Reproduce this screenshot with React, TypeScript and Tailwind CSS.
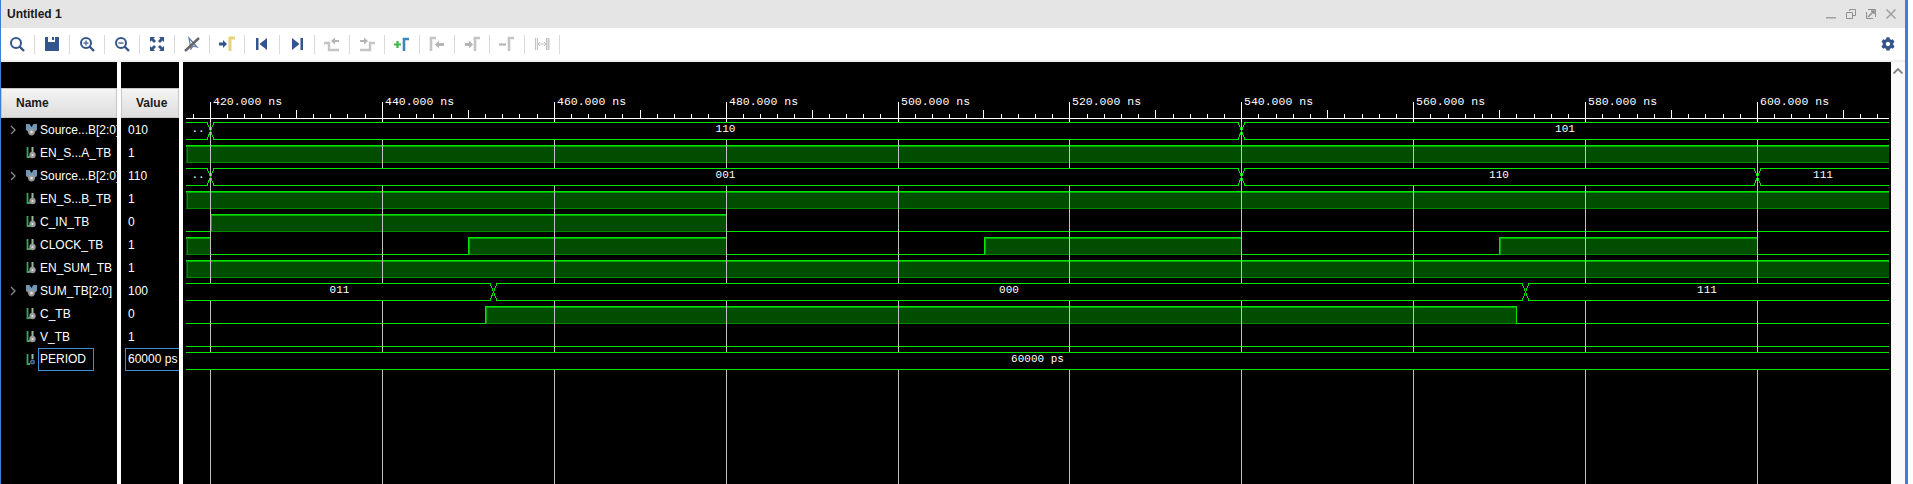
import type { ReactNode } from 'react'
import { FaCog } from 'react-icons/fa'

const BLUE = '#34558b'
const GRAY = '#c4c4c4'
const GREEN = '#00e600'
const MID = '#00a800'
const DIM = '#008800'
const FILL = '#004d00'

const LEFT = 186
const RIGHT = 1889

function Glass({ mark }: { mark?: 'plus' | 'minus' }) {
  return (
    <svg width="16" height="16" viewBox="0 0 16 16" fill="none" stroke={BLUE}>
      <circle cx="7" cy="7" r="5" strokeWidth="2" />
      <path d="M10.5 10.5L15 15" strokeWidth="2.4" />
      {mark && <path d="M4.5 7h5" strokeWidth="1.6" stroke="#5a78a8" />}
      {mark === 'plus' && <path d="M7 4.5v5" strokeWidth="1.6" stroke="#5a78a8" />}
    </svg>
  )
}

const tools: ReactNode[] = [
  <Glass key="search" />,
  <svg key="save" width="16" height="16" viewBox="0 0 16 16">
    <path d="M1 1h3v5h7V1h4v14H1z" fill={BLUE} />
    <path d="M8 1h2v3H8z" fill={BLUE} />
  </svg>,
  <Glass key="in" mark="plus" />,
  <Glass key="out" mark="minus" />,
  <svg key="fit" width="16" height="16" viewBox="0 0 16 16" fill={BLUE}>
    <path d="M1 1h5L4.6 2.6 7 5 5 7 2.6 4.6 1 6z" />
    <path d="M15 1v5l-1.6-1.6L11 7 9 5l2.4-2.4L10 1z" />
    <path d="M1 15v-5l1.6 1.6L5 9l2 2-2.4 2.4L6 15z" />
    <path d="M15 15h-5l1.6-1.6L9 11l2-2 2.4 2.4L15 10z" />
  </svg>,
  <svg key="cursor" width="16" height="16" viewBox="0 0 16 16" fill="none">
    <path d="M5 2l2 11 2-3 4 1z" stroke="#5a78a8" strokeWidth="1.2" />
    <path d="M1 15L15 2" stroke="#666" strokeWidth="2.4" />
  </svg>,
  <svg key="goto" width="18" height="16" viewBox="0 0 18 16" fill="none">
    <path d="M1 6.5h4V4l4 4-4 4V9.5H1z" fill={BLUE} />
    <path d="M12 15V2h5" stroke="#e8d27a" strokeWidth="3" />
  </svg>,
  <svg key="prev" width="16" height="16" viewBox="0 0 16 16" fill={BLUE}>
    <path d="M2 2h2.5v12H2z" />
    <path d="M13 2v12L5.5 8z" />
  </svg>,
  <svg key="next" width="16" height="16" viewBox="0 0 16 16" fill={BLUE}>
    <path d="M11.5 2H14v12h-2.5z" />
    <path d="M3 2v12l7.5-6z" />
  </svg>,
  <svg key="stepl" width="16" height="16" viewBox="0 0 16 16" fill="none">
    <path d="M0 7h5v7h10" stroke={GRAY} strokeWidth="2.4" />
    <path d="M15 4H11V1.5L7 5l4 3.5V6h4z" fill="#b5b5b5" />
  </svg>,
  <svg key="stepr" width="16" height="16" viewBox="0 0 16 16" fill="none">
    <path d="M1 14h10V7h5" stroke={GRAY} strokeWidth="2.4" />
    <path d="M1 4h4V1.5L9 5 5 8.5V6H1z" fill="#b5b5b5" />
  </svg>,
  <svg key="add" width="16" height="16" viewBox="0 0 16 16" fill="none">
    <path d="M0 8.5h7M3.5 5v7" stroke="#3fb54a" strokeWidth="2.2" />
    <path d="M10 15V3h5" stroke="#3a86b8" strokeWidth="2.6" />
  </svg>,
  <svg key="mprev" width="16" height="16" viewBox="0 0 16 16" fill="none">
    <path d="M2 15V2h5" stroke={GRAY} strokeWidth="2.6" />
    <path d="M15 7h-5V4.5L6 8.5l4 4V10h5z" fill="#b5b5b5" />
  </svg>,
  <svg key="mnext" width="16" height="16" viewBox="0 0 16 16" fill="none">
    <path d="M1 7h4V4.5l4 4-4 4V10H1z" fill="#b5b5b5" />
    <path d="M11 15V2h5" stroke={GRAY} strokeWidth="2.6" />
  </svg>,
  <svg key="mdel" width="16" height="16" viewBox="0 0 16 16" fill="none">
    <path d="M0 8.5h7" stroke="#b5b5b5" strokeWidth="2.2" />
    <path d="M10 15V2h5" stroke={GRAY} strokeWidth="2.6" />
  </svg>,
  <svg key="span" width="16" height="16" viewBox="0 0 16 16" fill="none" stroke={GRAY}>
    <path d="M1.5 2v12M3.5 2v12M12.5 2v12" strokeWidth="1.2" />
    <path d="M14.5 2v12" strokeWidth="2" />
    <path d="M4 8h8M6 6L4 8l2 2M10 6l2 2-2 2" strokeWidth="1" />
  </svg>,
]

type Row = { name: string; value: string; bus?: boolean; dot?: boolean; selected?: boolean }

const rows: Row[] = [
  { name: 'Source...B[2:0]', value: '010', bus: true },
  { name: 'EN_S...A_TB', value: '1' },
  { name: 'Source...B[2:0]', value: '110', bus: true },
  { name: 'EN_S...B_TB', value: '1' },
  { name: 'C_IN_TB', value: '0' },
  { name: 'CLOCK_TB', value: '1' },
  { name: 'EN_SUM_TB', value: '1' },
  { name: 'SUM_TB[2:0]', value: '100', bus: true },
  { name: 'C_TB', value: '0' },
  { name: 'V_TB', value: '1' },
  { name: 'PERIOD', value: '60000 ps', dot: true, selected: true },
]

function SignalIcon({ bus, dot }: { bus?: boolean; dot?: boolean }) {
  if (bus) {
    return (
      <svg width="13" height="14" viewBox="0 0 13 14">
        <path d="M1 1h3.5l2 3 2-3H12v6l-2.5 2h-6L1 7z" fill="#6f96b4" />
        <circle cx="6.5" cy="9" r="3.4" fill="#9a9a9a" />
        <circle cx="6.5" cy="9" r="1.3" fill="#e4e4e4" />
      </svg>
    )
  }
  return (
    <svg width="13" height="14" viewBox="0 0 13 14" fill="none">
      <path d="M2.5 1v10H5" stroke="#3fa05f" strokeWidth="1.8" />
      <path d="M7.5 1v5" stroke="#9ab8a0" strokeWidth="2" />
      <circle cx="7.5" cy="9" r={dot ? 2.5 : 3.2} fill={dot ? '#4a6a9c' : '#9a9a9a'} />
      <circle cx="7.5" cy="9" r="1.1" fill={dot ? '#20304c' : '#e4e4e4'} />
    </svg>
  )
}

const majorX = Array.from({ length: 10 }, (_, i) => Math.floor(210.4 + i * 171.9))

function ticks() {
  const out: { x: number; tall: boolean }[] = []
  for (let n = -1; n < 100; n++) {
    const x = Math.floor(210.4 + n * 17.19)
    if (n % 10 === 0 || x < LEFT || x > RIGHT - 1) continue
    out.push({ x, tall: n % 5 === 0 })
  }
  return out
}

function hline(x1: number, x2: number, y: number, color = GREEN) {
  return <rect x={x1} y={y} width={x2 - x1} height={1} fill={color} />
}

function vline(x: number, y1: number, y2: number, color = GREEN) {
  return <rect x={x} y={y1} width={1} height={y2 - y1} fill={color} />
}

// rising/falling edges of a one bit signal, levels alternate from `startHigh`
function Digital({ row, edges, startHigh }: { row: number; edges: number[]; startHigh: boolean }) {
  const top = 122 + row * 23
  const bottom = top + 17
  const points = [LEFT, ...edges, RIGHT]
  return (
    <g>
      {points.slice(0, -1).map((x1, i) => {
        const x2 = points[i + 1]
        const high = startHigh ? i % 2 === 0 : i % 2 === 1
        if (!high) return <g key={x1}>{hline(x1, x2, bottom)}</g>
        const edgeLeft = x1 !== LEFT
        return (
          <g key={x1}>
            <rect x={x1} y={top + 1} width={x2 - x1} height={16} fill={FILL} />
            {hline(x1, x2, top)}
            {hline(x1, x2, top + 1, MID)}
            {hline(x1, x2, bottom, DIM)}
            {edgeLeft ? vline(x1, top, bottom + 1) : vline(x1 + 1, top + 1, bottom, DIM)}
            {edgeLeft && vline(x1 + 1, top + 1, bottom, MID)}
            {x2 !== RIGHT && vline(x2, top, bottom + 1)}
          </g>
        )
      })}
    </g>
  )
}

function Bus({ row, edges, labels }: { row: number; edges: number[]; labels: string[] }) {
  const top = 122 + row * 23
  const bottom = top + 17
  const points = [LEFT, ...edges, RIGHT]
  return (
    <g>
      <rect x={LEFT} y={top + 1} width={RIGHT - LEFT} height={16} fill="#000" />
      {edges.filter((x) => majorX.includes(x)).map((x) => (
        <g key={x}>{vline(x, top, bottom, '#c0c0c0')}</g>
      ))}
      {points.slice(0, -1).map((a, i) => {
        const b = points[i + 1]
        const x1 = a === LEFT ? LEFT : a + 4
        const x2 = b === RIGHT ? RIGHT : b - 3
        return (
          <g key={a}>
            {hline(x1, x2, top)}
            {hline(x1, x2, bottom)}
            <text
              x={(a + b) / 2}
              y={top + 10}
              textAnchor="middle"
              fill="#fff"
              className="font-['Liberation_Mono',monospace] text-[11px]"
            >
              {labels[i]}
            </text>
          </g>
        )
      })}
      {edges.map((x) => (
        <path
          key={x}
          d={`M${x - 3} ${top + 0.5}L${x + 4} ${bottom + 0.5}M${x - 3} ${bottom + 0.5}L${x + 4} ${top + 0.5}`}
          stroke={GREEN}
          strokeWidth="1"
        />
      ))}
    </g>
  )
}

function Waves() {
  return (
    <svg width="1708" height="422" viewBox="183 62 1708 422" shapeRendering="crispEdges" className="block">
      <Digital row={1} edges={[]} startHigh />
      <Digital row={3} edges={[]} startHigh />
      <Digital row={4} edges={[210, 726]} startHigh={false} />
      <Digital row={5} edges={[210, 468, 726, 984, 1241, 1499, 1757]} startHigh />
      <Digital row={6} edges={[]} startHigh />
      <Digital row={8} edges={[485, 1516]} startHigh={false} />
      {hline(LEFT, RIGHT, 346)}

      {majorX.map((x) => (
        <g key={x}>{vline(x, 122, 484, '#c0c0c0')}</g>
      ))}

      <Bus row={0} edges={[210, 1241]} labels={['..', '110', '101']} />
      <Bus row={2} edges={[210, 1241, 1757]} labels={['..', '001', '110', '111']} />
      <Bus row={7} edges={[493, 1525]} labels={['011', '000', '111']} />
      <Bus row={10} edges={[]} labels={['60000 ps']} />

      {hline(LEFT, RIGHT, 118, '#fff')}
      {ticks().map(({ x, tall }) => (
        <g key={x}>{vline(x, tall ? 110 : 114, 118, '#fff')}</g>
      ))}
      {majorX.map((x, i) => (
        <g key={x}>
          {vline(x, 102, 122, '#fff')}
          <text x={x + 3} y={105} fill="#fff" className="font-['Liberation_Mono',monospace] text-[11.5px]">
            {420 + i * 20}.000 ns
          </text>
        </g>
      ))}
    </svg>
  )
}

export default function App() {
  return (
    <div className="w-[1913px] h-[484px] bg-white overflow-hidden flex font-['Liberation_Sans',sans-serif]">
      <div className="w-[1905px] h-full flex flex-col border-l border-[#3d7fd6]">

        {/* Title bar */}
        <div className="h-[28px] shrink-0 bg-[#e5e5e5] flex items-center justify-between pl-[6px] pr-[4px]">
          <span className="text-[12px] font-bold text-[#1a1a1a]">Untitled 1</span>
          <div className="flex items-center">
            <div className="w-5 h-5 flex items-center justify-center">
              <svg width="12" height="12" viewBox="0 0 12 12"><path d="M1 9h10v1.5H1z" fill="#a0a0a0" /></svg>
            </div>
            <div className="w-5 h-5 flex items-center justify-center">
              <svg width="12" height="12" viewBox="0 0 12 12" fill="none" stroke="#909090">
                <path d="M4.5 3V1.5h6v6H8" />
                <path d="M1.5 4.5h6v6h-6z" />
              </svg>
            </div>
            <div className="w-5 h-5 flex items-center justify-center">
              <svg width="12" height="12" viewBox="0 0 12 12" fill="none" stroke="#909090">
                <path d="M3 1.5h7.5V9" />
                <path d="M1.5 4v6.5H8" />
                <path d="M3 9l6-6M6 3h3v3" strokeWidth="1.5" />
              </svg>
            </div>
            <div className="w-5 h-5 flex items-center justify-center">
              <svg width="12" height="12" viewBox="0 0 12 12" fill="none" stroke="#a0a0a0" strokeWidth="1.6">
                <path d="M1.5 1.5l9 9M10.5 1.5l-9 9" />
              </svg>
            </div>
          </div>
        </div>

        {/* Toolbar */}
        <div className="h-[32px] shrink-0 bg-white flex items-center justify-between pr-[10px]">
          <div className="flex items-center h-[19px] -ml-px">
            {tools.map((tool, i) => (
              <div key={i} className="w-[35px] h-full flex items-center justify-center border-r border-[#d9d9d9]">
                {tool}
              </div>
            ))}
          </div>
          <FaCog size={14} color={BLUE} />
        </div>
        <div className="h-[2px] shrink-0 bg-[#f0f0f0]" />

        <div className="flex-1 flex min-h-0">
          {/* Names */}
          <div className="w-[116px] shrink-0 bg-black flex flex-col">
            <div className="h-[26px] shrink-0" />
            <div className="h-[30px] shrink-0 bg-gradient-to-b from-[#f4f4f4] to-[#dddddd] border border-[#c6c6c6] flex items-center pl-[14px]">
              <span className="text-[12px] font-bold text-[#1a1a1a]">Name</span>
            </div>
            {rows.map((row, i) => (
              <div key={i} className="h-[23px] shrink-0 flex items-center overflow-hidden">
                <div className="w-[24px] shrink-0 flex items-center justify-center">
                  {row.bus && (
                    <svg width="8" height="10" viewBox="0 0 8 10" fill="none" stroke="#8a8a8a" strokeWidth="1.3">
                      <path d="M2 1l4 4-4 4" />
                    </svg>
                  )}
                </div>
                <div className="w-[13px] shrink-0 flex items-center justify-center">
                  <SignalIcon bus={row.bus} dot={row.dot} />
                </div>
                <span
                  className={`text-[12px] text-white whitespace-nowrap ${
                    row.selected ? 'border border-[#3d8fd1] w-[56px] h-[23px] leading-[21px] pl-px' : 'pl-[2px]'
                  }`}
                >
                  {row.name}
                </span>
              </div>
            ))}
          </div>
          <div className="w-[4px] shrink-0 bg-white" />

          {/* Values */}
          <div className="w-[58px] shrink-0 bg-black flex flex-col">
            <div className="h-[26px] shrink-0" />
            <div className="h-[30px] shrink-0 bg-gradient-to-b from-[#f4f4f4] to-[#dddddd] border border-[#c6c6c6] flex items-center pl-[14px]">
              <span className="text-[12px] font-bold text-[#1a1a1a]">Value</span>
            </div>
            {rows.map((row, i) => (
              <div key={i} className="h-[23px] shrink-0 flex items-center overflow-hidden">
                <span
                  className={`text-[12px] text-white whitespace-nowrap ${
                    row.selected
                      ? 'ml-[4px] border-y border-l border-[#3d8fd1] w-[54px] h-[23px] leading-[21px] pl-[2px]'
                      : 'pl-[7px]'
                  }`}
                >
                  {row.value}
                </span>
              </div>
            ))}
          </div>
          <div className="w-[4px] shrink-0 bg-white" />

          {/* Wave canvas */}
          <div className="w-[1708px] shrink-0 bg-black">
            <Waves />
          </div>

          {/* Scrollbar */}
          <div className="flex-1 bg-[#fafafa] flex justify-center pt-[6px]">
            <svg width="10" height="6" viewBox="0 0 10 6" fill="none" stroke="#808080" strokeWidth="1.8">
              <path d="M0.5 5.5L5 1l4.5 4.5" />
            </svg>
          </div>
        </div>
      </div>
      <div className="w-[3px] h-full bg-[#3d7fd6]" />
    </div>
  )
}
